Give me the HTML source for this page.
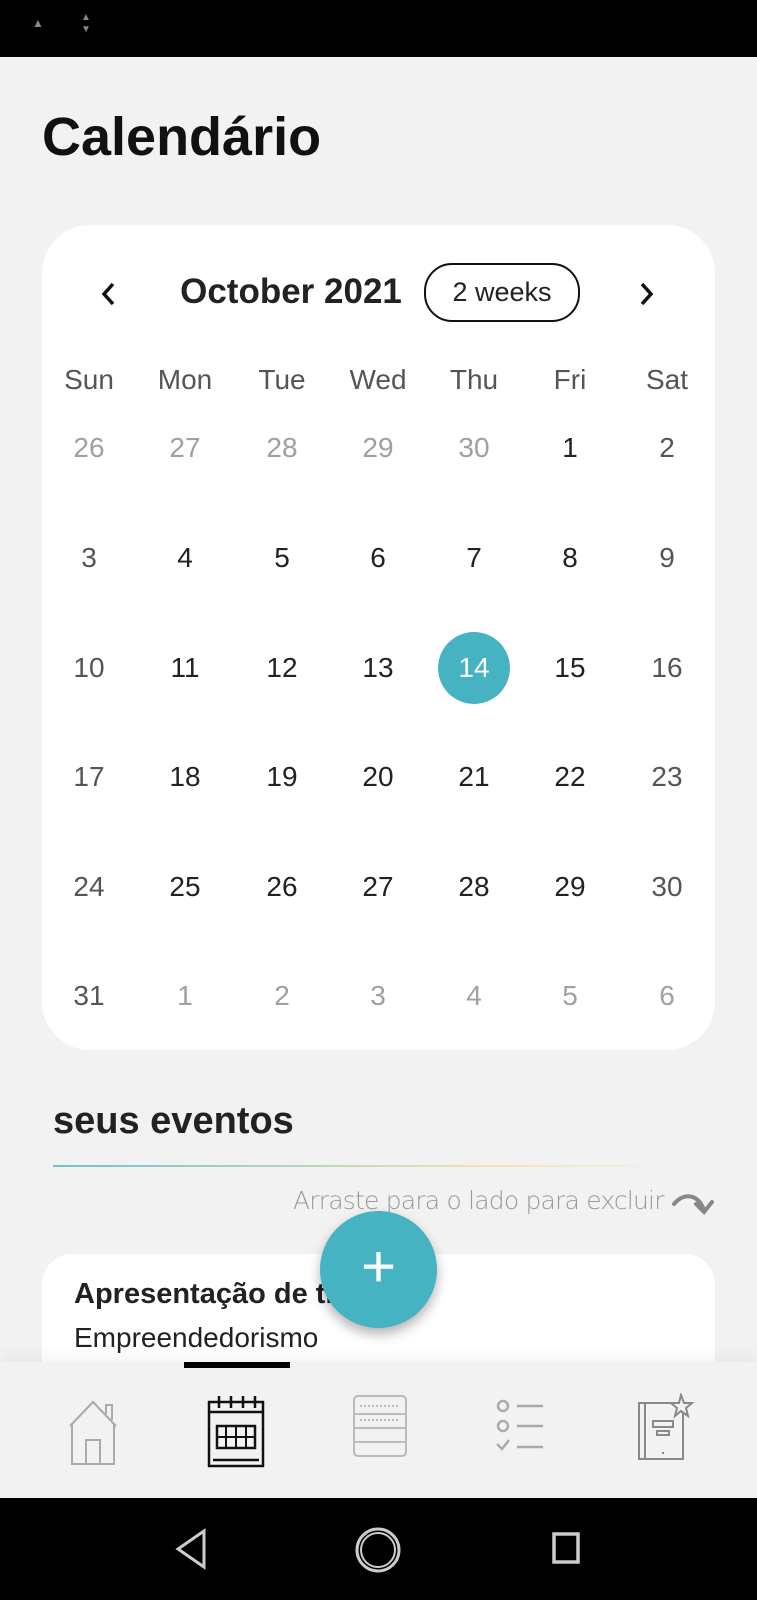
<!DOCTYPE html>
<html><head><meta charset="utf-8"><style>
*{margin:0;padding:0;box-sizing:border-box}
body{width:757px;height:1600px;background:#f2f2f2;font-family:"Liberation Sans",sans-serif;position:relative;overflow:hidden;color:#222}
.abs{position:absolute}
.status{left:0;top:0;width:757px;height:57px;background:#000}
.title{left:42px;top:106px;font-size:54px;font-weight:bold;color:#111}
.card{left:42px;top:225px;width:673px;height:825px;background:#fff;border-radius:48px}
.c{position:absolute;transform:translate(-50%,-50%);font-size:28px;white-space:nowrap;color:#222}
.g{color:#a0a0a0}
.dn{color:#555}
.sel{width:72px;height:72px;border-radius:50%;background:#45b3c1;color:#fff}
.ev{left:42px;top:1254px;width:673px;height:108px;background:#fff;border-radius:30px 30px 0 0}
.nav{left:0;top:1362px;width:757px;height:136px;background:#f2f2f2;box-shadow:0 -8px 14px rgba(0,0,0,0.04)}
.sys{left:0;top:1498px;width:757px;height:102px;background:#000}
.fab{left:320px;top:1211px;width:117px;height:117px;border-radius:50%;background:#45b3c1;box-shadow:0 6px 12px rgba(0,0,0,0.3);color:#fff;font-size:60px;text-align:center;line-height:112px;font-weight:300}
</style></head><body>
<div class="abs status"></div>
<div class="abs" style="left:32px;top:16px;color:#888;font-size:12px">▲</div>
<div class="abs" style="left:81px;top:12px;color:#888;font-size:10px;line-height:12px">▲<br>▼</div>
<div class="abs title">Calendário</div>
<div class="abs card"></div>
<svg class="abs" style="left:98px;top:280px" width="22" height="28"><path d="M15 4 L6 14 L15 24" stroke="#111" stroke-width="3.5" fill="none"/></svg>
<div class="c" style="left:291px;top:292px;font-weight:bold;font-size:35px;color:#222">October 2021</div>
<div class="abs" style="left:424px;top:263px;width:156px;height:59px;border:2px solid #111;border-radius:28px;text-align:center;line-height:55px;font-size:27px">2 weeks</div>
<svg class="abs" style="left:636px;top:280px" width="22" height="28"><path d="M6 4 L15 14 L6 24" stroke="#111" stroke-width="3.5" fill="none"/></svg>
<div id="grid"></div>
<div class="abs" style="left:53px;top:1100px;font-size:38px;font-weight:bold;color:#222">seus eventos</div>
<div class="abs" style="left:53px;top:1165px;width:620px;height:2px;background:linear-gradient(90deg,#6cc3cf,#f1e3b0 70%,#f2f2f2)"></div>
<div class="abs" style="left:293px;top:1186px;font-size:25px;color:#999;font-family:'DejaVu Sans',sans-serif;font-weight:200;letter-spacing:-0.8px">Arraste para o lado para excluir</div>
<svg class="abs" style="left:670px;top:1190px" width="48" height="30"><path d="M4 14 C14 2 28 4 34 20 M26 14 L34 22 L42 12" stroke="#888" stroke-width="4" fill="none" stroke-linecap="round"/></svg>
<div class="abs ev"></div>
<div class="abs" style="left:74px;top:1278px;font-size:29px;font-weight:bold;color:#222">Apresentação de trabalho</div>
<div class="abs" style="left:74px;top:1322px;font-size:28px;color:#222">Empreendedorismo</div>
<div class="abs nav"></div>
<div class="abs" style="left:184px;top:1362px;width:106px;height:6px;background:#000"></div>
<svg class="abs" style="left:60px;top:1390px" width="70" height="80" fill="none" stroke="#aaa" stroke-width="2">
<path d="M10 36 L33 12 L56 36 M12 34 V74 H54 V34 M26 74 V50 H40 V74 M46 24 V15 H52 V30"/></svg>
<svg class="abs" style="left:205px;top:1390px" width="64" height="80" fill="none" stroke="#111" stroke-width="2.5">
<rect x="4" y="12" width="54" height="64"/><path d="M4 22 H58 M8 70 H54 M14 6 V18 M26 6 V18 M38 6 V18 M50 6 V18"/>
<rect x="12" y="36" width="38" height="22"/><path d="M12 47 H50 M21 36 V58 M31 36 V58 M41 36 V58" stroke-width="2"/></svg>
<svg class="abs" style="left:350px;top:1392px" width="60" height="70" fill="none" stroke="#bbb" stroke-width="2">
<rect x="4" y="4" width="52" height="60" rx="4"/><path d="M4 22 H56 M4 36 H56 M4 50 H56" /><path d="M10 14 H50 M10 28 H50" stroke-dasharray="2 2"/></svg>
<svg class="abs" style="left:495px;top:1398px" width="56" height="60" fill="none" stroke="#aaa" stroke-width="2.5">
<circle cx="8" cy="8" r="5"/><circle cx="8" cy="28" r="5"/><path d="M2 46 L7 51 L14 42 M22 8 H48 M22 28 H48 M22 49 H48"/></svg>
<svg class="abs" style="left:635px;top:1393px" width="60" height="70" fill="none" stroke="#888" stroke-width="2">
<rect x="4" y="10" width="44" height="56"/><path d="M10 10 V66 M18 28 H38 V34 H18 Z M22 38 H34 V42 H22 Z M27 60 H29"/><path d="M46 2 L49 10 L57 10 L51 15 L53 23 L46 18 L40 23 L42 15 L36 10 L44 10 Z" fill="#f2f2f2"/></svg>
<div class="abs fab">+</div>
<div class="abs sys"></div>
<svg class="abs" style="left:170px;top:1525px" width="40" height="50" fill="none" stroke="#ccc" stroke-width="3"><path d="M34 6 L8 24 L34 42 Z"/></svg>
<svg class="abs" style="left:355px;top:1525px" width="50" height="50" fill="none" stroke="#ccc"><ellipse cx="23" cy="25" rx="21" ry="21" stroke-width="3"/><ellipse cx="23" cy="25" rx="17" ry="17" stroke-width="2"/></svg>
<svg class="abs" style="left:550px;top:1530px" width="34" height="40" fill="none" stroke="#ccc" stroke-width="3.5"><rect x="4" y="4" width="24" height="28"/></svg>
<script>
var xs=[89,185,282,378,474,570,667];
var names=["Sun","Mon","Tue","Wed","Thu","Fri","Sat"];
var h="";
names.forEach(function(n,i){h+='<div class="c dn" style="left:'+xs[i]+'px;top:380px">'+n+'</div>';});
var rows=[[26,27,28,29,30,1,2],[3,4,5,6,7,8,9],[10,11,12,13,14,15,16],[17,18,19,20,21,22,23],[24,25,26,27,28,29,30],[31,1,2,3,4,5,6]];
var ys=[448,558,668,777,887,996];
rows.forEach(function(r,ri){r.forEach(function(d,i){
var cls="c";
if((ri==0&&i<5)||(ri==5&&i>0))cls+=" g";
else if(i==0||i==6)cls+=" dn";
if(ri==2&&i==4){h+='<div class="c sel" style="left:'+xs[i]+'px;top:'+ys[ri]+'px;line-height:72px;text-align:center;transform:translate(-50%,-50%)">'+d+'</div>';return;}
h+='<div class="'+cls+'" style="left:'+xs[i]+'px;top:'+ys[ri]+'px">'+d+'</div>';});});
document.getElementById("grid").innerHTML=h;
</script>
</body></html>
